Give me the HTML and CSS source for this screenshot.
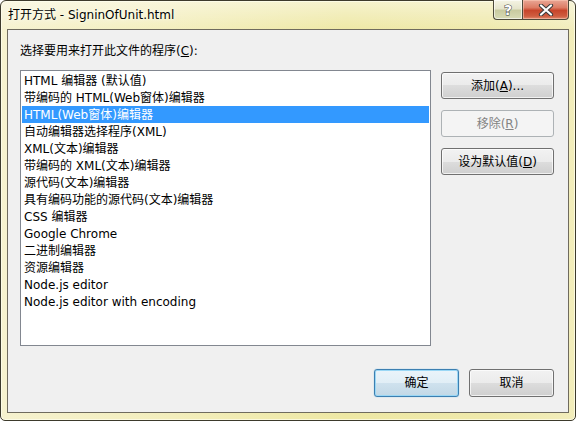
FILE: index.html
```html
<!DOCTYPE html>
<html>
<head>
<meta charset="utf-8">
<link rel="stylesheet" href="styles.css">
</head>
<body>
<div class="window">
  <div class="titlebar">
    <div class="title">打开方式 - SigninOfUnit.html</div>
    <div class="caption">
      <div class="cap-btn help"><span class="help-glyph">?</span></div>
      <div class="cap-btn close">
        <svg width="16" height="12" viewBox="0 0 16 12">
          <path d="M3 1.5 L13 10.5 M13 1.5 L3 10.5" stroke="#3b3b3b" stroke-width="4.2" stroke-linecap="round"/>
          <path d="M3 1.5 L13 10.5 M13 1.5 L3 10.5" stroke="#ffffff" stroke-width="2.2" stroke-linecap="round"/>
        </svg>
      </div>
    </div>
  </div>
  <div class="client">
    <div class="label">选择要用来打开此文件的程序(<u>C</u>):</div>
    <div class="main">
      <div class="listbox">
        <div class="item">HTML 编辑器 (默认值)</div>
        <div class="item">带编码的 HTML(Web窗体)编辑器</div>
        <div class="item selected">HTML(Web窗体)编辑器</div>
        <div class="item">自动编辑器选择程序(XML)</div>
        <div class="item">XML(文本)编辑器</div>
        <div class="item">带编码的 XML(文本)编辑器</div>
        <div class="item">源代码(文本)编辑器</div>
        <div class="item">具有编码功能的源代码(文本)编辑器</div>
        <div class="item">CSS 编辑器</div>
        <div class="item">Google Chrome</div>
        <div class="item">二进制编辑器</div>
        <div class="item">资源编辑器</div>
        <div class="item">Node.js editor</div>
        <div class="item">Node.js editor with encoding</div>
      </div>
      <div class="side">
        <div class="btn">添加(<u>A</u>)...</div>
        <div class="btn disabled">移除(<u>R</u>)</div>
        <div class="btn">设为默认值(<u>D</u>)</div>
      </div>
    </div>
    <div class="footer">
      <div class="btn wide default">确定</div>
      <div class="btn wide">取消</div>
    </div>
  </div>
</div>
</body>
</html>
```

FILE: styles.css
```css
* { box-sizing: border-box; }
html, body {
  margin: 0;
  padding: 0;
  width: 576px;
  height: 421px;
  overflow: hidden;
  background: #ffffff;
}
body {
  font-family: "DejaVu Sans", "Noto Sans CJK SC", sans-serif;
  font-size: 12px;
  color: #000;
}
.window {
  width: 576px;
  height: 421px;
  border: 1px solid #3d3a2c;
  border-radius: 6px 6px 5px 5px;
  background:
    linear-gradient(to bottom, rgba(255,255,255,0.45), rgba(255,255,255,0) 30px),
    linear-gradient(to right, #f6f2cf 0%, #f3eebc 30%, #eee8a4 60%, #efe9ab 85%, #f2edbb 100%);
  display: flex;
  flex-direction: column;
  box-shadow: inset 0 0 0 1px rgba(255,255,240,0.7);
}
.titlebar {
  height: 28px;
  display: flex;
  align-items: flex-start;
  justify-content: space-between;
  padding: 0 6px 0 7px;
}
.title {
  font-size: 12px;
  line-height: 14px;
  padding-top: 7px;
  color: #000;
  text-shadow: 0 0 6px #fffef0, 0 0 3px #fffef0;
}
.caption {
  display: flex;
  margin-top: -1px;
}
.cap-btn {
  height: 20px;
  border: 1px solid #4d4a3a;
  border-top: none;
  display: flex;
  align-items: center;
  justify-content: center;
}
.help {
  width: 29px;
  border-right: none;
  border-radius: 0 0 0 4px;
  background: linear-gradient(to bottom, #f5f4e4 0%, #e6e5cc 45%, #c9cba0 55%, #d8dbb6 100%);
  box-shadow: inset 0 0 0 1px rgba(255,255,255,0.6);
}
.help-glyph {
  font-family: "DejaVu Sans", sans-serif;
  font-weight: bold;
  font-size: 14px;
  line-height: 14px;
  color: #fff;
  -webkit-text-stroke: 1px #3c3c3c;
  paint-order: stroke fill;
}
.close {
  width: 47px;
  border-radius: 0 0 4px 0;
  background: linear-gradient(to bottom, #e9a796 0%, #dd7c64 40%, #c7452b 55%, #cf5d40 85%, #e08a6e 100%);
  box-shadow: inset 0 0 0 1px rgba(255,210,190,0.5);
}
.client {
  flex: 1;
  margin: 0 6px 7px 6px;
  border: 1px solid #6f6b5e;
  background: #f0f0f0;
  display: flex;
  flex-direction: column;
  padding: 0 14px 15px 12px;
}
.label {
  margin-top: 12px;
  padding-top: 1px;
  line-height: 16px;
  height: 17px;
}
.main {
  margin-top: 11px;
  display: flex;
  gap: 10px;
}
.listbox {
  width: 411px;
  height: 276px;
  border: 1px solid #828790;
  background: #fff;
  padding: 1px;
}
.item {
  height: 17px;
  line-height: 16px;
  padding-top: 1px;
  padding-left: 2px;
  white-space: nowrap;
}
.item.selected {
  background: #3399ff;
  color: #fff;
}
.side {
  display: flex;
  flex-direction: column;
  gap: 11px;
  padding-top: 2px;
}
.btn {
  width: 113px;
  height: 27px;
  border: 1px solid #707070;
  border-radius: 3px;
  background: linear-gradient(to bottom, #f2f2f2 0%, #ebebeb 50%, #dddddd 50%, #cfcfcf 100%);
  box-shadow: inset 0 0 0 1px rgba(255,255,255,0.7);
  display: flex;
  align-items: center;
  justify-content: center;
  line-height: 16px;
  color: #000;
}
.btn.disabled {
  border-color: #adb2b5;
  background: #f4f4f4;
  color: #838383;
  box-shadow: none;
}
.footer {
  margin-top: auto;
  display: flex;
  justify-content: flex-end;
  gap: 10px;
}
.btn.wide {
  width: 85px;
  height: 28px;
}
.btn.default {
  border-color: #3c7fb1;
  background: linear-gradient(to bottom, #eaf4fa 0%, #e1eef6 50%, #cfe2ee 50%, #c2d8e6 100%);
  box-shadow: inset 0 0 0 1px #9ad7f5, 0 0 1px #48a8e0;
}
```
